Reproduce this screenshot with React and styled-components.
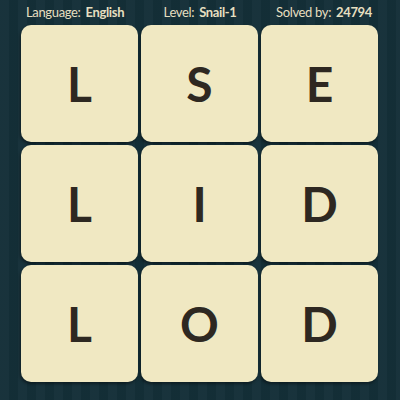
import React from 'react';
import styled, { createGlobalStyle } from 'styled-components';

const Global = createGlobalStyle`
    html, body {
        margin: 0;
        padding: 0;
    }
    body {
        width: 400px;
        height: 400px;
        overflow: hidden;
        background: #142f38;
    }
`;

const Page = styled.div`
    width: 400px;
    height: 400px;
    box-sizing: border-box;
    padding: 0 21px 0 21px;
    display: flex;
    flex-direction: column;
    background-color: #142f38;
    background-image: repeating-linear-gradient(
        90deg,
        rgba(255, 255, 255, 0.018) 0px,
        rgba(255, 255, 255, 0.018) 9px,
        rgba(0, 0, 0, 0.03) 9px,
        rgba(0, 0, 0, 0.03) 18px
    );
    font-family: "Lato", "Open Sans", sans-serif;
`;

const Header = styled.div`
    height: 24px;
    display: flex;
    align-items: center;
    justify-content: space-between;
    padding: 0 7px 0 5px;
    color: #e6dfc0;
    font-size: 13px;
`;

const Stat = styled.span`
    white-space: nowrap;
    letter-spacing: -0.35px;
`;

const Value = styled.b`
    font-weight: 700;
    margin-left: 5px;
`;

const Board = styled.div`
    margin-top: 1px;
    display: grid;
    grid-template-columns: repeat(3, 117px);
    grid-template-rows: repeat(3, 117px);
    gap: 3px;
`;

const Tile = styled.div`
    background: #f0e8c2;
    border-radius: 10px;
    display: flex;
    align-items: center;
    justify-content: center;
    box-shadow: -1px 2px 3px rgba(0, 0, 0, 0.4);
    color: #2e2821;
    font-family: "Lato", sans-serif;
    font-weight: 700;
    font-size: 48px;
    line-height: 1;
`;

const letters = ['L', 'S', 'E', 'L', 'I', 'D', 'L', 'O', 'D'];

export default function App() {
    return (
        <>
            <Global />
            <Page>
                <Header>
                    <Stat>Language:<Value>English</Value></Stat>
                    <Stat>Level:<Value>Snail-1</Value></Stat>
                    <Stat>Solved by:<Value>24794</Value></Stat>
                </Header>
                <Board>
                    {letters.map((l, i) => (
                        <Tile key={i}>{l}</Tile>
                    ))}
                </Board>
            </Page>
        </>
    );
}
